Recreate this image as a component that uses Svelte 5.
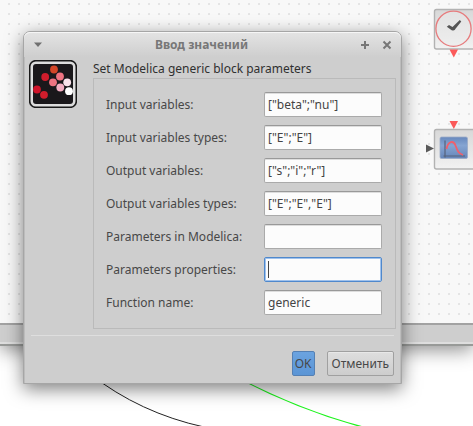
<script>
  let fields = $state([
    { id: 'inputs', label: 'Input variables:', value: '["beta";"nu"]' },
    { id: 'input-types', label: 'Input variables types:', value: '["E";"E"]' },
    { id: 'outputs', label: 'Output variables:', value: '["s";"i";"r"]' },
    { id: 'output-types', label: 'Output variables types:', value: '["E";"E","E"]' },
    { id: 'params', label: 'Parameters in Modelica:', value: '' },
    { id: 'props', label: 'Parameters properties:', value: '', active: true },
    { id: 'name', label: 'Function name:', value: 'generic' }
  ]);
</script>

<div class="desktop">
  <div class="backdrop" aria-hidden="true">
    <div class="editor">
      <div class="canvas">
        <svg class="blocks" width="40" height="180" viewBox="433 0 40 180">
          <defs>
            <linearGradient id="face" x1="0" y1="0" x2="0" y2="1">
              <stop offset="0" stop-color="#d8d8d8" />
              <stop offset="1" stop-color="#f2f2f2" />
            </linearGradient>
            <linearGradient id="screen" x1="0" y1="0" x2="0" y2="1">
              <stop offset="0" stop-color="#6788bd" />
              <stop offset=".4" stop-color="#86a5d2" />
              <stop offset="1" stop-color="#6585b9" />
            </linearGradient>
          </defs>
          <rect x="434.5" y="9.5" width="42" height="39.5" rx="2" fill="url(#face)" stroke="#b2b2b2" stroke-width="1.4" />
          <circle cx="453.5" cy="28.7" r="17.6" fill="#ececec" fill-opacity=".5" stroke="#e77b7d" stroke-width="1.3" />
          <path d="M446.8 26.800l2.200-1.800 3.500 2 7.300-7 1.500 1.500-5.800 7.200a2.800 2.800 0 0 1-4.800.8z" fill="#555" />
          <path d="M449.5 49.5h8.500l-4.200 8z" fill="#fb5a5a" />
          <path d="M449.5 121h8.500l-4.200 8z" fill="#fb5a5a" />
          <rect x="434.5" y="129.5" width="42" height="39.5" rx="2" fill="url(#face)" stroke="#b2b2b2" stroke-width="1.4" />
          <rect x="440" y="137" width="27.500" height="21.500" rx="1.500" fill="url(#screen)" stroke="#9cabc6" stroke-width=".8" />
          <path d="M445 140.500v17M443.500 156h21.500" fill="none" stroke="#56637c" stroke-width="1.2" />
          <path d="M446.500 149c1.500-8 7-9 9-3.500s3 8 7.500 9.500" fill="none" stroke="#f0606c" stroke-width="1.800" />
        </svg>
        <svg class="port" width="9" height="9" viewBox="0 0 9 9"><path d="M1 .500L9 4.500 1 8.500z" fill="#5a5a5a" /></svg>
      </div>
      <div class="scrollbar"></div>
    </div>
    <svg class="curves" width="473" height="60" viewBox="0 366 473 60">
      <path d="M90 374Q140 413 204 427" fill="none" stroke="#222" />
      <path d="M240 379Q302 411 363 427" fill="none" stroke="#1cf41c" stroke-width="1.3" />
    </svg>
  </div>

  <form class="dialog" role="dialog" aria-labelledby="title" onsubmit={(e) => e.preventDefault()}>
    <header>
      <button type="button" class="tool" aria-label="Menu">
        <svg width="10" height="10" viewBox="0 0 10 10"><path d="M1 2.500h8L5 7z" fill="#707070" /></svg>
      </button>
      <h1 id="title">Ввод значений</h1>
      <button type="button" class="tool" aria-label="Maximize">
        <svg width="10" height="10" viewBox="0 0 10 10"><path d="M5 1v8M1 5h8" stroke="#777" stroke-width="2" /></svg>
      </button>
      <button type="button" class="tool" aria-label="Close">
        <svg width="10" height="10" viewBox="0 0 10 10"><path d="M1.500 1.500l7 7M8.500 1.500l-7 7" stroke="#777" stroke-width="2" /></svg>
      </button>
    </header>

    <div class="content">
      <svg class="logo" width="48" height="48" viewBox="0 0 48 48" aria-hidden="true">
        <rect x=".7" y=".7" width="46.600" height="46.600" rx="6" fill="#ddd" stroke="#191919" stroke-width="1.600" />
        <rect x="4" y="4" width="40" height="40" rx="3" fill="#1a181b" />
        <circle cx="25" cy="9.500" r="3.900" fill="#d34627" />
        <circle cx="16.200" cy="17" r="3.900" fill="#d01d2c" />
        <circle cx="31" cy="16.500" r="3.900" fill="#ee7381" />
        <circle cx="24" cy="22.300" r="3.900" fill="#ee7381" />
        <circle cx="38.200" cy="22.300" r="3.900" fill="#fbe4ec" />
        <circle cx="31.300" cy="27.500" r="3.900" fill="#f4aec2" />
        <circle cx="40" cy="31.200" r="3.900" fill="#fff" />
        <circle cx="8" cy="29.500" r="3.900" fill="#d0142a" />
        <circle cx="15" cy="34.800" r="3.900" fill="#d01d2c" />
      </svg>
      <div class="main">
        <h2>Set Modelica generic block parameters</h2>
        <div class="fields">
          {#each fields as field (field.id)}
            <label for={field.id}>{field.label}</label>
            <input id={field.id} type="text" class:active={field.active} bind:value={field.value} />
          {/each}
        </div>
      </div>
    </div>

    <footer>
      <button type="submit" class="action primary">OK</button>
      <button type="button" class="action">Отменить</button>
    </footer>
  </form>
</div>

<style>
  :global(body) {
    margin: 0;
    background: #fff;
  }
  .desktop {
    position: relative;
    min-height: 100vh;
    box-sizing: border-box;
    padding: 31px 71px 0 23px;
    overflow: hidden;
    font-family: "Noto Sans", "Open Sans", sans-serif;
    font-size: 12px;
    line-height: 18px;
    color: #484848;
  }
  .backdrop {
    position: absolute;
    inset: 0;
  }
  .editor {
    box-shadow: 0 4px 18px rgba(0, 0, 0, 0.45);
  }
  .canvas {
    position: relative;
    height: 323px;
    background-color: #f8f8f8;
    background-image: radial-gradient(circle at 9px 4px, #dedede 0, #dedede 0.6px, transparent 1px);
    background-size: 10px 10px;
  }
  .blocks {
    position: absolute;
    left: 433px;
    top: 0;
  }
  .port {
    position: absolute;
    left: 425px;
    top: 144px;
  }
  .scrollbar {
    height: 16px;
    padding-bottom: 3px;
    border-top: 2px solid #a2a2a2;
    border-bottom: 2px solid #989a98;
    background: #cecece;
    box-shadow: inset 0 -2px #dedede;
  }
  .curves {
    position: absolute;
    left: 0;
    top: 366px;
  }
  .dialog {
    position: relative;
    border: 1px solid #a6a6a6;
    border-radius: 7px 7px 0 0;
    background: #cecece;
    box-shadow: inset 1px 0 #bcbcbc, inset -1px 0 #bcbcbc, 0 5px 18px rgba(0, 0, 0, 0.5);
  }
  header {
    display: flex;
    align-items: center;
    gap: 12px;
    height: 25px;
    padding: 0 9px;
    border-radius: 6px 6px 0 0;
    background: linear-gradient(#e4e4e4, #cecece);
    box-shadow: inset 0 1px #f6f6f6;
  }
  h1,
  h2 {
    margin: 0;
    font-size: 12px;
    line-height: 18px;
  }
  h1 {
    flex: 1;
    text-align: center;
    font-weight: 700;
    color: #777;
  }
  h2 {
    font-weight: 400;
    color: #303030;
  }
  .tool {
    display: flex;
    padding: 0;
    border: 0;
    background: none;
  }
  .content {
    display: flex;
    align-items: flex-start;
    gap: 16px;
    padding: 3px 5px 6px;
  }
  .logo {
    flex: none;
  }
  .main {
    flex: 1;
  }
  .fields {
    display: grid;
    grid-template-columns: 1fr 118px;
    align-items: center;
    row-gap: 8px;
    padding: 13px 13px 13px 12px;
    border: 1px solid #bababa;
  }
  input {
    box-sizing: border-box;
    width: 100%;
    height: 25px;
    padding: 0 3px;
    border: 1px solid #aaa;
    border-top-color: #999;
    border-radius: 2px;
    background: #fcfcfc;
    box-shadow: inset 0 1px #ddd;
    color: #444;
    font: inherit;
    outline: none;
  }
  .active {
    border-color: #4f88cc;
    box-shadow: inset 0 0 0 1px #a0c2ec;
    background: linear-gradient(#444, #444) 3px center / 1px 17px no-repeat #fcfcfc;
  }
  footer {
    display: flex;
    justify-content: flex-end;
    gap: 12px;
    margin: 0 7px;
    padding: 15px 0 7px;
    border-top: 1px solid #dedede;
  }
  .action {
    height: 25px;
    padding: 0 4px;
    border: 1px solid #a0a0a0;
    border-radius: 2px;
    background: linear-gradient(#dedede, #cdcdcd);
    box-shadow: inset 0 1px #e8e8e8;
    color: #484848;
    font: inherit;
  }
  .primary {
    padding: 0 2px;
    border-color: #5480b4;
    background: linear-gradient(#6ba3e0, #5b95d5);
    box-shadow: none;
  }
</style>
